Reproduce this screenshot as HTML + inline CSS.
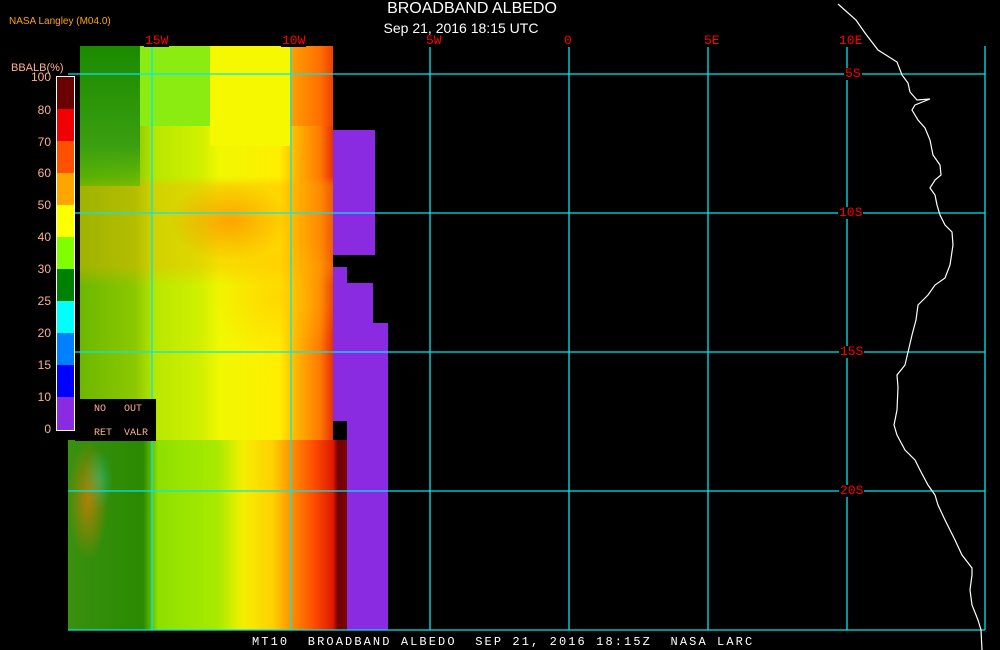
<!DOCTYPE html>
<html><head><meta charset="utf-8"><style>
html,body{margin:0;padding:0;background:#000;width:1000px;height:650px;overflow:hidden;position:relative;font-family:"Liberation Sans",sans-serif}
.a{position:absolute}
.t{position:absolute;color:#f00;font-family:"Liberation Mono",monospace;font-size:13px;line-height:12px;background:#000;padding:0 1px}
.lb{position:absolute;color:#ffb090;font-size:12px;right:949px;text-align:right}
</style></head><body>
<div class="a" style="left:80px;top:46px;width:253px;height:394px;background:
radial-gradient(ellipse 60px 40px at 150px 175px,rgba(255,140,0,.7),transparent),
radial-gradient(ellipse 70px 60px at 200px 250px,rgba(255,200,0,.6),transparent),
linear-gradient(180deg,transparent 0,transparent 130px,rgba(255,170,0,.35) 140px,rgba(255,170,0,.35) 220px,transparent 240px),
linear-gradient(90deg,#6cb800 0,#8cc800 55px,#b8e800 75px,#d0f000 120px,#f0f800 140px,#ffee00 200px,#ffb800 215px,#ff7a00 240px,#e83000 253px)"></div>
<div class="a" style="left:80px;top:46px;width:60px;height:140px;background:linear-gradient(180deg,#1b8a00,#3a9f10 100px,rgba(90,180,0,.6))"></div>
<div class="a" style="left:140px;top:46px;width:70px;height:80px;background:#8aec10"></div>
<div class="a" style="left:210px;top:46px;width:80px;height:100px;background:#f6f800"></div>
<div class="a" style="left:290px;top:46px;width:43px;height:80px;background:linear-gradient(90deg,#ffa000,#ff7000 30px,#f04000)"></div>
<div class="a" style="left:68px;top:440px;width:279px;height:190px;background:
linear-gradient(90deg,#3a9010 0,#2a8a00 75px,#8ee000 90px,#a8ea00 150px,#f4f000 175px,#ffd000 205px,#ff8a00 225px,#ff5000 245px,#e01800 265px,#700000 270px,#7a0800 279px)"></div>
<div class="a" style="left:68px;top:440px;width:85px;height:190px;background:radial-gradient(ellipse 20px 60px at 20px 60px,rgba(255,120,0,.6),transparent),radial-gradient(ellipse 15px 30px at 30px 40px,rgba(0,230,230,.4),transparent)"></div>
<div class="a" style="left:333px;top:130px;width:42px;height:125px;background:#8a2be2"></div>
<div class="a" style="left:333px;top:267px;width:14px;height:16px;background:#8a2be2"></div>
<div class="a" style="left:333px;top:283px;width:40px;height:40px;background:#8a2be2"></div>
<div class="a" style="left:333px;top:323px;width:55px;height:98px;background:#8a2be2"></div>
<div class="a" style="left:347px;top:421px;width:41px;height:209px;background:#8a2be2"></div>
<svg class="a" style="left:0;top:0" width="1000" height="650">
<g stroke="#00e8f0" stroke-width="1.3" fill="none">
<line x1="152" y1="46" x2="152" y2="630"/><line x1="291" y1="46" x2="291" y2="630"/>
<line x1="430" y1="46" x2="430" y2="630"/><line x1="569" y1="46" x2="569" y2="630"/>
<line x1="708" y1="46" x2="708" y2="630"/><line x1="847" y1="46" x2="847" y2="630"/>
<line x1="985" y1="46" x2="985" y2="630"/>
<line x1="68" y1="74" x2="985" y2="74"/><line x1="68" y1="213" x2="985" y2="213"/>
<line x1="68" y1="352" x2="985" y2="352"/><line x1="68" y1="491" x2="985" y2="491"/>
<line x1="68" y1="630" x2="985" y2="630"/>
</g>
<polyline fill="none" stroke="#fff" stroke-width="1.2" points="838,4 856,20 865,33 878,50 897,62 902,75 908,83 910,92 917,100 930,99 915,105 912,110 918,120 925,128 930,140 933,155 940,165 941,175 935,180 930,188 935,195 937,205 940,215 945,225 952,232 953,245 950,265 945,278 935,285 928,295 918,305 916,320 912,335 905,365 897,375 898,387 897,410 894,425 897,435 905,450 915,460 920,470 928,485 935,495 938,505 945,520 955,540 962,555 972,568 972,575 970,590 972,605 978,620 981,630 982,650"/>
</svg>
<div class="t" style="left:144px;top:35px">15W</div>
<div class="t" style="left:281px;top:35px">10W</div>
<div class="t" style="left:425px;top:35px">5W</div>
<div class="t" style="left:563px;top:35px">0</div>
<div class="t" style="left:703px;top:35px">5E</div>
<div class="t" style="left:838px;top:35px">10E</div>
<div class="t" style="left:844px;top:68px">5S</div>
<div class="t" style="left:838px;top:207px">10S</div>
<div class="t" style="left:839px;top:346px">15S</div>
<div class="t" style="left:839px;top:485px">20S</div>
<div class="a" style="left:0;top:0px;width:944px;text-align:center;color:#fff;font-size:16px">BROADBAND ALBEDO</div>
<div class="a" style="left:0;top:20px;width:922px;text-align:center;color:#fff;font-size:14px">Sep 21, 2016 18:15 UTC</div>
<div class="a" style="left:9px;top:16px;color:#ffa500;font-size:10px">NASA Langley (M04.0)</div>
<div class="a" style="left:11px;top:62px;color:#ffb090;font-size:11px">BBALB(%)</div>
<div class="a" style="left:56px;top:76px;width:17px;height:353px;border:1px solid #fff;background:linear-gradient(180deg,#6b0000 0 32px,#f00000 32px 64px,#ff5000 64px 96px,#ffa500 96px 128px,#ffff00 128px 160px,#80ff00 160px 192px,#008000 192px 224px,#00ffff 224px 256px,#0080ff 256px 288px,#0000ff 288px 320px,#8a2be2 320px)"></div>
<div class="lb" style="top:70px">100</div><div class="lb" style="top:103px">80</div>
<div class="lb" style="top:135px">70</div><div class="lb" style="top:166px">60</div>
<div class="lb" style="top:198px">50</div><div class="lb" style="top:230px">40</div>
<div class="lb" style="top:262px">30</div><div class="lb" style="top:294px">25</div>
<div class="lb" style="top:326px">20</div><div class="lb" style="top:358px">15</div>
<div class="lb" style="top:390px">10</div><div class="lb" style="top:422px">0</div>
<div class="a" style="left:75px;top:399px;width:81px;height:42px;background:#000;color:#ffb090;font-family:'Liberation Mono',monospace;font-size:10px">
<span class="a" style="left:19px;top:5px">NO</span><span class="a" style="left:49px;top:5px">OUT</span>
<span class="a" style="left:19px;top:29px">RET</span><span class="a" style="left:49px;top:29px">VALR</span></div>
<div class="a" style="left:252px;top:635px;color:#fff;font-family:'Liberation Mono',monospace;font-size:12px;white-space:pre;letter-spacing:2.1px">MT10  BROADBAND ALBEDO  SEP 21, 2016 18:15Z  NASA LARC</div>
</body></html>
